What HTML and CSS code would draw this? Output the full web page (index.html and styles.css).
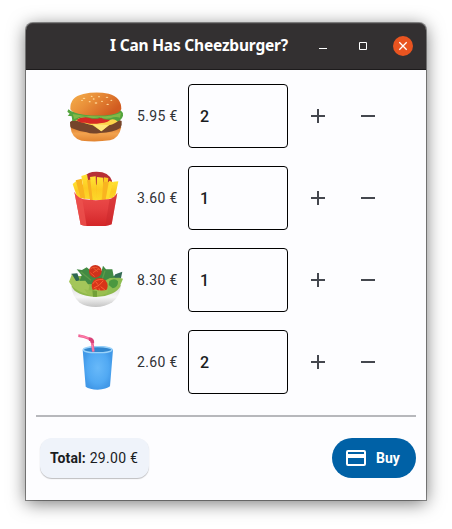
FILE: index.html
```html
<!DOCTYPE html>
<html lang="en">
<head>
<meta charset="utf-8">
<title>I Can Has Cheezburger?</title>
<link rel="stylesheet" href="styles.css">
</head>
<body>
<main class="window">
  <header class="titlebar">
    <h1 class="title">I Can Has Cheezburger?</h1>
    <div class="controls">
      <svg class="control" viewBox="0 0 20 20"><path d="M6 12.5h8" stroke="#fff"/></svg>
      <svg class="control" viewBox="0 0 20 20"><path d="M6.5 6.5h7v7h-7z" fill="none" stroke="#fff"/></svg>
      <svg class="control" viewBox="0 0 20 20"><circle cx="10" cy="10" r="10" fill="#e95420"/><path d="M6.3 6.3l7.4 7.4M13.7 6.3l-7.4 7.4" stroke="#fff" stroke-width="1.3"/></svg>
    </div>
  </header>
  <section class="items">
    <div class="row">
      <svg class="food" viewBox="0 12 210 192">
        <defs>
          <linearGradient id="bun" x1="0" y1="0" x2="1" y2=".5"><stop offset="0" stop-color="#f5b04c"/><stop offset=".45" stop-color="#e99039"/><stop offset="1" stop-color="#d15b20"/></linearGradient>
          <linearGradient id="base" x1="0" y1="0" x2="0" y2="1"><stop offset="0" stop-color="#d97828"/><stop offset=".5" stop-color="#f2a24e"/><stop offset="1" stop-color="#e28430"/></linearGradient>
        </defs>
        <path d="M31 138Q34 175 65 182Q107 187 150 181Q178 174 184 140Z" fill="url(#base)"/>
        <path d="M30 126Q29 138 34 144Q54 153 80 157Q94 163 120 159Q160 157 181 144Q187 134 185 123L160 113H50Z" fill="#75452b"/>
        <path d="M42 120Q80 132 98 136L124 154L147 136Q166 132 176 121L150 112H60Z" fill="#fbd54b"/>
        <path d="M98 133L124 154L147 135Z" fill="#ffe77b"/>
        <path d="M49 119Q66 107 96 113L153 115Q149 128 119 130Q99 134 76 128Q59 130 49 119Z" fill="#d62a24"/>
        <path d="M25 88L34 94Q70 102 108 104Q160 104 182 91Q190 97 189 107Q186 119 172 124Q163 115 151 119Q135 121 122 113Q103 120 88 113Q68 109 56 115Q46 125 37 122L35 109L23 107L29 101L22 95Z" fill="#53a43e"/>
        <path d="M38 102Q70 109 108 109Q156 110 183 98L180 113Q166 108 151 115Q132 119 120 111Q100 117 82 110Q61 108 43 117Z" fill="#81b947"/>
        <path d="M31 88Q29 51 70 42Q107 34 146 41Q184 51 184 87Q181 99 153 104Q115 109 72 104Q35 100 31 88Z" fill="url(#bun)"/>
        <g fill="#ffd999"><ellipse cx="72" cy="55" rx="4" ry="2"/><ellipse cx="95" cy="49" rx="3" ry="2"/><ellipse cx="117" cy="50" rx="3" ry="2"/><ellipse cx="141" cy="52" rx="4" ry="2"/><ellipse cx="154" cy="61" rx="3" ry="2"/><ellipse cx="66" cy="61" rx="3" ry="2"/><ellipse cx="89" cy="65" rx="3" ry="2"/><ellipse cx="108" cy="69" rx="4" ry="2"/><ellipse cx="126" cy="64" rx="3" ry="2"/><ellipse cx="143" cy="73" rx="4" ry="2"/><ellipse cx="101" cy="57" rx="3" ry="2"/></g>
      </svg>
      <span class="price">5.95 €</span>
      <div class="qty">2</div>
      <svg class="step" viewBox="0 0 50 40"><path d="M18 20h14M25 13v14"/></svg>
      <svg class="step" viewBox="0 0 50 40"><path d="M18 20h14"/></svg>
    </div>
    <div class="row">
      <svg class="food" viewBox="0 12 210 192">
        <defs>
          <linearGradient id="carton" x1="0" y1="0" x2="0" y2="1"><stop offset="0" stop-color="#ed4f4b"/><stop offset=".5" stop-color="#e43f40"/><stop offset="1" stop-color="#d32528"/></linearGradient>
          <linearGradient id="fry" x1="0" y1="0" x2="0" y2="1"><stop offset="0" stop-color="#ffe434"/><stop offset=".55" stop-color="#fdca22"/><stop offset="1" stop-color="#fbd829"/></linearGradient>
        </defs>
        <path d="M74 43Q83 29 108 29Q146 28 156 56L155 90H66Z" fill="#b72f36"/>
        <path d="M60 68H160V108H60Z" fill="#fbbd22"/>
        <path d="M38 66L48 58L59 80L62 109L51 104Z" fill="url(#fry)"/>
        <path d="M47 55L65 50L77 111L62 109Z" fill="#f9b41f"/>
        <path d="M64 42L81 37L95 112L76 110Z" fill="url(#fry)"/>
        <path d="M81 55L101 50L103 114L90 114Z" fill="#f8af22"/>
        <path d="M90 45L107 43L110 114L98 114Z" fill="url(#fry)"/>
        <path d="M111 45L130 47L127 114L108 114Z" fill="url(#fry)"/>
        <path d="M132 46L145 48L138 113L124 114Z" fill="#fbca23"/>
        <path d="M130 59L151 60L145 112L126 113Z" fill="#f9b420"/>
        <path d="M147 56L160 61L148 110L137 112Z" fill="#ffdb2d"/>
        <path d="M160 59L175 58L166 101L145 112Z" fill="url(#fry)"/>
        <path d="M43 89Q49 104 67 111Q107 118 149 111Q164 107 172 92L155 187Q147 191 136 192H80Q70 191 62 188Z" fill="url(#carton)"/>
        <path d="M43 89Q49 104 67 111L80 192Q70 191 62 188Z" fill="#ec514d" opacity=".8"/>
        <path d="M172 92Q164 107 149 111L136 192Q147 191 155 187Z" fill="#c8282d" opacity=".45"/>
      </svg>
      <span class="price">3.60 €</span>
      <div class="qty">1</div>
      <svg class="step" viewBox="0 0 50 40"><path d="M18 20h14M25 13v14"/></svg>
      <svg class="step" viewBox="0 0 50 40"><path d="M18 20h14"/></svg>
    </div>
    <div class="row">
      <svg class="food" viewBox="0 12 210 192">
        <defs><linearGradient id="bowl" x1="0" y1="0" x2="0" y2="1"><stop offset="0" stop-color="#ddd"/><stop offset=".55" stop-color="#f6f6f6"/><stop offset="1" stop-color="#c4c4c4"/></linearGradient></defs>
        <path d="M33 123Q36 158 59 176Q80 189 107 189Q135 189 157 175Q180 157 183 123Z" fill="url(#bowl)"/>
        <path d="M35 127Q45 155 107 159Q168 155 182 125L160 96H55Z" fill="#8eb84b"/>
        <path d="M34 89L52 88L59 109L44 113Z" fill="#2e6652"/>
        <path d="M166 91L187 83L183 102L168 110L157 104Z" fill="#356c56"/>
        <path d="M50 76L66 78L80 70L89 77L96 94L125 80L129 65L138 76L157 76L161 96L172 107L151 128L108 121L75 120L59 110L65 94Z" fill="#428a43"/>
        <path d="M62 83L93 109M135 80L126 108" stroke="#5c9c4a" stroke-width="4"/>
        <circle cx="106" cy="82" r="19" fill="#cf321c"/>
        <path d="M91 75Q105 63 121 78M91 86L104 98M100 72L113 83M99 86L117 74" fill="none" stroke="#f1592f" stroke-width="3"/>
        <path d="M27 113L36 91L48 111L76 110L88 126L83 151Q50 143 34 124Z" fill="#a4c65a"/>
        <path d="M128 113L150 102L178 101L189 104L180 126Q163 145 138 151L126 137Z" fill="#8dbd51"/>
        <path d="M148 111Q164 100 174 112Q175 130 158 133L146 123Z" fill="#4b983f"/>
        <circle cx="119" cy="126" r="24" fill="#d83419"/>
        <path d="M98 120Q107 104 130 107M101 132L117 124L130 110M122 128L136 139M107 113L114 122M108 133V139M117 133L120 144" fill="none" stroke="#fa6336" stroke-width="3"/>
        <path d="M73 135Q94 143 105 136Q124 143 145 136L141 148Q121 158 84 153Z" fill="#9abf50"/>
        <path d="M97 139L111 141V158H99Z" fill="#719f37"/>
      </svg>
      <span class="price">8.30 €</span>
      <div class="qty">1</div>
      <svg class="step" viewBox="0 0 50 40"><path d="M18 20h14M25 13v14"/></svg>
      <svg class="step" viewBox="0 0 50 40"><path d="M18 20h14"/></svg>
    </div>
    <div class="row">
      <svg class="food" viewBox="0 12 210 192">
        <defs><radialGradient id="cup"><stop offset="0" stop-color="#68b9f9"/><stop offset=".7" stop-color="#51a9f3"/><stop offset="1" stop-color="#4299e8"/></radialGradient></defs>
        <path d="M68 71Q84 59 113 60Q145 60 159 71L150 181Q140 190 113 191Q88 190 77 182Z" fill="url(#cup)"/>
        <ellipse cx="113" cy="71" rx="43" ry="9" fill="#3186ce" stroke="#9bd3fa" stroke-width="4"/>
        <path d="M55 29Q72 31 87 38Q98 41 97 51L100 77" fill="none" stroke="#f16395" stroke-width="8"/>
        <path d="M87 39Q98 40 97 51" fill="none" stroke="#d94278" stroke-width="11"/>
        <path d="M60 29L84 36M97 57L100 76" stroke="#ff82ad" stroke-width="3"/>
      </svg>
      <span class="price">2.60 €</span>
      <div class="qty">2</div>
      <svg class="step" viewBox="0 0 50 40"><path d="M18 20h14M25 13v14"/></svg>
      <svg class="step" viewBox="0 0 50 40"><path d="M18 20h14"/></svg>
    </div>
  </section>
  <footer class="checkout">
    <div class="total"><b>Total:</b> 29.00 €</div>
    <button class="buy">
      <svg class="card" viewBox="0 0 20 16"><path fill="#fff" fill-rule="evenodd" d="M2 0h16a2 2 0 0 1 2 2v12a2 2 0 0 1-2 2H2a2 2 0 0 1-2-2V2a2 2 0 0 1 2-2zM2 2v2h16V2zM2 8v6h16V8z"/></svg>
      <span>Buy</span>
    </button>
  </footer>
</main>
</body>
</html>
```
FILE: styles.css
```css
* { box-sizing: border-box; }
body {
  margin: 0;
  padding: 23px 26px 29px;
  height: 529px;
  background: #fff;
  font-family: Roboto, "Liberation Sans", sans-serif;
  font-size: 14px;
  color: #1a1c1e;
  overflow: hidden;
}
.window {
  height: 477px;
  background: #fdfdff;
  border-radius: 7px 7px 0 0;
  box-shadow: 0 0 0 1px rgba(0, 0, 0, .4), 0 3px 18px rgba(0, 0, 0, .55);
}
.titlebar {
  display: flex;
  align-items: center;
  justify-content: flex-end;
  height: 47px;
  padding-right: 13px;
  background: #333031;
  border-bottom: 1px solid #1d1b1c;
  border-radius: 7px 7px 0 0;
  box-shadow: inset 0 1px #454243;
}
.title {
  width: 180px;
  margin: -2px 23px 0 0;
  font: 700 15.5px/22px "Noto Sans", sans-serif;
  letter-spacing: -.2px;
  white-space: nowrap;
  color: #fff;
}
.controls { display: flex; gap: 20px; }
.control { display: block; width: 20px; height: 20px; }
.items {
  display: grid;
  gap: 18px;
  padding: 14px 33px 21px 34px;
}
.row {
  display: grid;
  grid-template-columns: 70px 58px 100px 55px 45px;
  align-items: center;
  height: 64px;
}
.food { display: block; width: 70px; height: 64px; }
.price { padding-left: 7px; letter-spacing: .35px; white-space: nowrap; color: #303236; }
.qty {
  height: 64px;
  padding-left: 11px;
  border: 1px solid #000;
  border-radius: 4px;
  font-size: 16px;
  font-weight: 500;
  line-height: 63px;
  letter-spacing: .5px;
}
.step {
  display: block;
  width: 50px;
  height: 40px;
  margin-left: 5px;
  fill: none;
  stroke: #44474e;
  stroke-width: 2;
}
.step:last-child { margin-left: 0; }
.checkout {
  display: flex;
  justify-content: space-between;
  margin: 0 10px;
  padding: 21px 0 0 4px;
  border-top: 2px solid #b7b8bc;
}
.total {
  width: 109px;
  height: 40px;
  padding-left: 10px;
  border-radius: 12px;
  background: #eff3fa;
  box-shadow: 0 1px 1px rgba(0, 0, 0, .25);
  line-height: 40px;
  letter-spacing: .3px;
  white-space: nowrap;
}
.total b { font-weight: 700; letter-spacing: .1px; }
.buy {
  display: flex;
  align-items: center;
  gap: 10px;
  width: 84px;
  height: 40px;
  padding: 0 0 0 14px;
  border: 0;
  border-radius: 20px;
  background: #0061a6;
  color: #fff;
  font: 700 14px Roboto, sans-serif;
}
.card { display: block; width: 20px; height: 16px; }
```
